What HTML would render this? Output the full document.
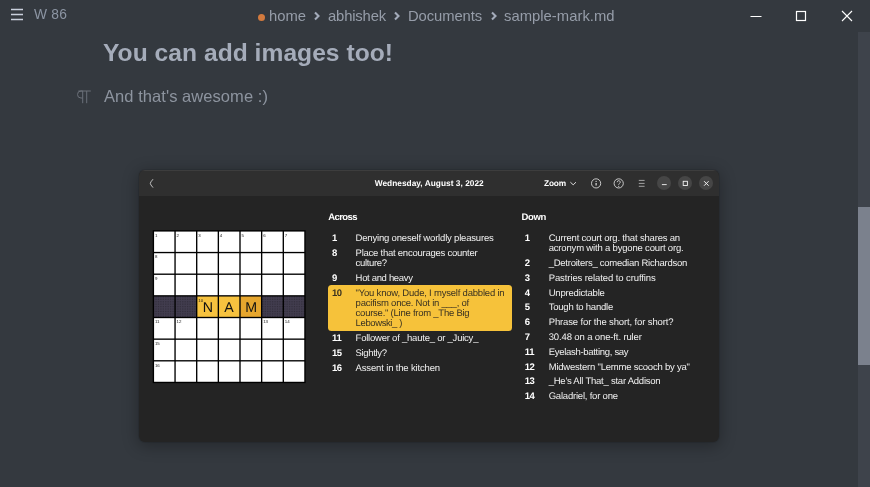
<!DOCTYPE html>
<html><head><meta charset="utf-8">
<style>
html,body{margin:0;padding:0;}
body{width:870px;height:487px;overflow:hidden;background:#34393f;font-family:"Liberation Sans",sans-serif;position:relative;}
.abs{position:absolute;}
.t{position:absolute;white-space:pre;font-family:"Liberation Sans",sans-serif;}
#sbtrack{position:absolute;left:858px;top:32px;width:12px;height:455px;background:#3e434b;}
#sbthumb{position:absolute;left:858px;top:207px;width:12px;height:158px;background:#7b818d;}
#win{position:absolute;left:139px;top:170px;width:580px;height:271.5px;background:#242424;border-radius:6px;box-shadow:0 3px 16px 1px rgba(0,0,0,.30),0 0 0 1px rgba(0,0,0,.08);overflow:hidden;}
#hdr{position:absolute;left:0;top:0;width:580px;height:26px;background:#2f2f2f;box-shadow:inset 0 1px 0 rgba(255,255,255,.07);}
#xw{position:absolute;left:0;top:0;width:870px;height:487px;will-change:transform;}
#hl{position:absolute;left:328px;top:285px;width:184px;height:45.5px;background:#f6c23a;border-radius:3.5px;}
.cb{position:absolute;width:14px;height:14px;border-radius:50%;background:#464646;top:176.4px;}
</style></head><body>
<svg class="abs" style="left:10px;top:7px" width="14" height="14" viewBox="0 0 14 14"><path d="M1 2.5h12M1 7.5h12M1 12.5h12" stroke="#c9d0dc" stroke-width="1.6" fill="none"/></svg>
<div class="abs" style="left:258px;top:14px;width:7px;height:7px;border-radius:4px;background:#d27a3e"></div>
<svg class="abs" style="left:313px;top:11px" width="8" height="10" viewBox="0 0 8 10"><path d="M2 1.5l3.5 3.5L2 8.5" stroke="#a3abba" stroke-width="2.1" fill="none"/></svg>
<svg class="abs" style="left:393px;top:11px" width="8" height="10" viewBox="0 0 8 10"><path d="M2 1.5l3.5 3.5L2 8.5" stroke="#a3abba" stroke-width="2.1" fill="none"/></svg>
<svg class="abs" style="left:490px;top:11px" width="8" height="10" viewBox="0 0 8 10"><path d="M2 1.5l3.5 3.5L2 8.5" stroke="#a3abba" stroke-width="2.1" fill="none"/></svg>
<svg class="abs" style="left:750px;top:8px" width="110" height="16" viewBox="0 0 110 16"><path d="M0.5 8.5h11" stroke="#fff" stroke-width="1" fill="none"/><rect x="46.5" y="3.500" width="9" height="9" stroke="#fff" stroke-width="1.2" fill="none"/><path d="M92 3l10 10M102 3l-10 10" stroke="#fff" stroke-width="1.1" fill="none"/></svg>
<svg class="abs" style="left:74px;top:88px" width="20" height="18" viewBox="74 88 20 18"><path d="M78.400 91H90.800M82.700 91V103.200M86.700 91V103.200M82.700 91H81a3.500 3.500 0 0 0 0 7H82.700" stroke="#6b7079" stroke-width="1" fill="none"/></svg>
<div id="sbtrack"></div><div id="sbthumb"></div>
<div id="win"><div id="hdr"></div></div>
<div id="hl"></div>
<div class="cb" style="left:657.1px"></div><div class="cb" style="left:678.3px"></div><div class="cb" style="left:699.3px"></div>
<svg class="abs" style="left:0;top:0;will-change:transform" width="870" height="487" viewBox="0 0 870 487">
<defs><pattern id="dots" width="1.7" height="1.7" patternUnits="userSpaceOnUse"><rect width="1.7" height="1.7" fill="#423d4f"/><rect width="0.8" height="0.8" fill="#2e2a37"/></pattern></defs>
<rect x="152.72" y="230.22" width="152.91" height="152.91" fill="#000"/>
<rect x="154.08" y="231.58" width="20.29" height="20.29" fill="#ffffff"/>
<rect x="175.73" y="231.58" width="20.29" height="20.29" fill="#ffffff"/>
<rect x="197.38" y="231.58" width="20.29" height="20.29" fill="#ffffff"/>
<rect x="219.03" y="231.58" width="20.29" height="20.29" fill="#ffffff"/>
<rect x="240.68" y="231.58" width="20.29" height="20.29" fill="#ffffff"/>
<rect x="262.33" y="231.58" width="20.29" height="20.29" fill="#ffffff"/>
<rect x="283.98" y="231.58" width="20.29" height="20.29" fill="#ffffff"/>
<rect x="154.08" y="253.23" width="20.29" height="20.29" fill="#ffffff"/>
<rect x="175.73" y="253.23" width="20.29" height="20.29" fill="#ffffff"/>
<rect x="197.38" y="253.23" width="20.29" height="20.29" fill="#ffffff"/>
<rect x="219.03" y="253.23" width="20.29" height="20.29" fill="#ffffff"/>
<rect x="240.68" y="253.23" width="20.29" height="20.29" fill="#ffffff"/>
<rect x="262.33" y="253.23" width="20.29" height="20.29" fill="#ffffff"/>
<rect x="283.98" y="253.23" width="20.29" height="20.29" fill="#ffffff"/>
<rect x="154.08" y="274.88" width="20.29" height="20.29" fill="#ffffff"/>
<rect x="175.73" y="274.88" width="20.29" height="20.29" fill="#ffffff"/>
<rect x="197.38" y="274.88" width="20.29" height="20.29" fill="#ffffff"/>
<rect x="219.03" y="274.88" width="20.29" height="20.29" fill="#ffffff"/>
<rect x="240.68" y="274.88" width="20.29" height="20.29" fill="#ffffff"/>
<rect x="262.33" y="274.88" width="20.29" height="20.29" fill="#ffffff"/>
<rect x="283.98" y="274.88" width="20.29" height="20.29" fill="#ffffff"/>
<rect x="154.08" y="296.53" width="20.29" height="20.29" fill="url(#dots)"/>
<rect x="175.73" y="296.53" width="20.29" height="20.29" fill="url(#dots)"/>
<rect x="197.38" y="296.53" width="20.29" height="20.29" fill="#f6c23f"/>
<rect x="219.03" y="296.53" width="20.29" height="20.29" fill="#f6c23f"/>
<rect x="240.68" y="296.53" width="20.29" height="20.29" fill="#e6a62e"/>
<rect x="262.33" y="296.53" width="20.29" height="20.29" fill="url(#dots)"/>
<rect x="283.98" y="296.53" width="20.29" height="20.29" fill="url(#dots)"/>
<rect x="154.08" y="318.18" width="20.29" height="20.29" fill="#ffffff"/>
<rect x="175.73" y="318.18" width="20.29" height="20.29" fill="#ffffff"/>
<rect x="197.38" y="318.18" width="20.29" height="20.29" fill="#ffffff"/>
<rect x="219.03" y="318.18" width="20.29" height="20.29" fill="#ffffff"/>
<rect x="240.68" y="318.18" width="20.29" height="20.29" fill="#ffffff"/>
<rect x="262.33" y="318.18" width="20.29" height="20.29" fill="#ffffff"/>
<rect x="283.98" y="318.18" width="20.29" height="20.29" fill="#ffffff"/>
<rect x="154.08" y="339.83" width="20.29" height="20.29" fill="#ffffff"/>
<rect x="175.73" y="339.83" width="20.29" height="20.29" fill="#ffffff"/>
<rect x="197.38" y="339.83" width="20.29" height="20.29" fill="#ffffff"/>
<rect x="219.03" y="339.83" width="20.29" height="20.29" fill="#ffffff"/>
<rect x="240.68" y="339.83" width="20.29" height="20.29" fill="#ffffff"/>
<rect x="262.33" y="339.83" width="20.29" height="20.29" fill="#ffffff"/>
<rect x="283.98" y="339.83" width="20.29" height="20.29" fill="#ffffff"/>
<rect x="154.08" y="361.48" width="20.29" height="20.29" fill="#ffffff"/>
<rect x="175.73" y="361.48" width="20.29" height="20.29" fill="#ffffff"/>
<rect x="197.38" y="361.48" width="20.29" height="20.29" fill="#ffffff"/>
<rect x="219.03" y="361.48" width="20.29" height="20.29" fill="#ffffff"/>
<rect x="240.68" y="361.48" width="20.29" height="20.29" fill="#ffffff"/>
<rect x="262.33" y="361.48" width="20.29" height="20.29" fill="#ffffff"/>
<rect x="283.98" y="361.48" width="20.29" height="20.29" fill="#ffffff"/>
<text x="154.90" y="236.80" font-size="4.4" fill="#1a1a1a" font-family="Liberation Sans, sans-serif">1</text>
<text x="176.55" y="236.80" font-size="4.4" fill="#1a1a1a" font-family="Liberation Sans, sans-serif">2</text>
<text x="198.20" y="236.80" font-size="4.4" fill="#1a1a1a" font-family="Liberation Sans, sans-serif">3</text>
<text x="219.85" y="236.80" font-size="4.4" fill="#1a1a1a" font-family="Liberation Sans, sans-serif">4</text>
<text x="241.50" y="236.80" font-size="4.4" fill="#1a1a1a" font-family="Liberation Sans, sans-serif">5</text>
<text x="263.15" y="236.80" font-size="4.4" fill="#1a1a1a" font-family="Liberation Sans, sans-serif">6</text>
<text x="284.80" y="236.80" font-size="4.4" fill="#1a1a1a" font-family="Liberation Sans, sans-serif">7</text>
<text x="154.90" y="258.45" font-size="4.4" fill="#1a1a1a" font-family="Liberation Sans, sans-serif">8</text>
<text x="154.90" y="280.10" font-size="4.4" fill="#1a1a1a" font-family="Liberation Sans, sans-serif">9</text>
<text x="198.20" y="301.75" font-size="4.4" fill="#1a1a1a" font-family="Liberation Sans, sans-serif">10</text>
<text x="154.90" y="323.40" font-size="4.4" fill="#1a1a1a" font-family="Liberation Sans, sans-serif">11</text>
<text x="176.55" y="323.40" font-size="4.4" fill="#1a1a1a" font-family="Liberation Sans, sans-serif">12</text>
<text x="263.15" y="323.40" font-size="4.4" fill="#1a1a1a" font-family="Liberation Sans, sans-serif">13</text>
<text x="284.80" y="323.40" font-size="4.4" fill="#1a1a1a" font-family="Liberation Sans, sans-serif">14</text>
<text x="154.90" y="345.05" font-size="4.4" fill="#1a1a1a" font-family="Liberation Sans, sans-serif">15</text>
<text x="154.90" y="366.70" font-size="4.4" fill="#1a1a1a" font-family="Liberation Sans, sans-serif">16</text>
<!-- header icons -->
<path d="M153 179.2Q150.300 182.300 150.300 183.400Q150.300 184.500 153 187.600" stroke="#d0d0d0" stroke-width="0.9" fill="none"/>
<path d="M570.4 182.2L573.2 184.8L576 182.2" stroke="#eee" stroke-width="0.9" fill="none"/>
<circle cx="596.1" cy="183.4" r="4.6" stroke="#eee" stroke-width="0.8" fill="none"/>
<path d="M596.1 182.900v2.700" stroke="#eee" stroke-width="1.1" fill="none"/><circle cx="596.1" cy="181.300" r="0.65" fill="#eee"/>
<circle cx="618.7" cy="183.4" r="4.6" stroke="#eee" stroke-width="0.8" fill="none"/>
<path d="M617.2 182.2a1.5 1.5 0 1 1 2.2 1.3c-0.5 0.3-0.7 0.6-0.7 1.2" stroke="#eee" stroke-width="0.8" fill="none"/><circle cx="618.7" cy="186.2" r="0.55" fill="#eee"/>
<path d="M638.8 180.4h5.8M638.8 183.4h5.8M638.8 186.3h5.8" stroke="#d4d4d4" stroke-width="0.7" fill="none"/>
<path d="M661.9 184.6h4.8" stroke="#f4f4f4" stroke-width="0.9" fill="none"/>
<rect x="683.2" y="181.3" width="4.2" height="4.2" stroke="#f4f4f4" stroke-width="0.9" fill="none"/>
<path d="M704.1 181.2l4.5 4.5M708.6 181.2l-4.500 4.500" stroke="#f2f2f2" stroke-width="1.0" fill="none"/>
</svg>
<div class="t" style="left:34.0px;top:6px;font-size:13.8px;line-height:17px;color:#8c95a3;letter-spacing:0.199px;">W 86</div>
<div class="t" style="left:269.0px;top:7px;font-size:14.8px;line-height:18px;color:#969da9;">home</div>
<div class="t" style="left:328.0px;top:7px;font-size:14.8px;line-height:18px;color:#969da9;letter-spacing:-0.154px;">abhishek</div>
<div class="t" style="left:408.0px;top:7px;font-size:14.8px;line-height:18px;color:#969da9;letter-spacing:-0.094px;">Documents</div>
<div class="t" style="left:504.0px;top:7px;font-size:14.8px;line-height:18px;color:#969da9;letter-spacing:0.029px;">sample-mark.md</div>
<div class="t" style="left:103.0px;top:38px;font-size:24.6px;line-height:30px;color:#a5acba;font-weight:bold;letter-spacing:0.033px;">You can add images too!</div>
<div class="t" style="left:104.0px;top:86px;font-size:16.5px;line-height:20px;color:#8d949f;letter-spacing:0.060px;">And that's awesome :)</div>
<div id="xw">
<div class="t" style="left:374.7px;top:178px;font-size:8.3px;line-height:10px;color:#ffffff;font-weight:bold;text-rendering:geometricPrecision;letter-spacing:0.035px;">Wednesday, August 3, 2022</div>
<div class="t" style="left:544.0px;top:178px;font-size:8.3px;line-height:10px;color:#ffffff;font-weight:bold;text-rendering:geometricPrecision;letter-spacing:-0.148px;">Zoom</div>
<div class="t" style="left:328.3px;top:212px;font-size:9.5px;line-height:11px;color:#ffffff;font-weight:bold;text-rendering:geometricPrecision;letter-spacing:-0.600px;">Across</div>
<div class="t" style="left:521.4px;top:212px;font-size:9.5px;line-height:11px;color:#ffffff;font-weight:bold;text-rendering:geometricPrecision;letter-spacing:-0.315px;">Down</div>
<div class="t" style="left:332.0px;top:233px;font-size:9.5px;line-height:11px;color:#ffffff;font-weight:bold;text-rendering:geometricPrecision;letter-spacing:-0.600px;">1</div>
<div class="t" style="left:355.6px;top:233px;font-size:9.5px;line-height:11px;color:#f0f0f0;text-rendering:geometricPrecision;letter-spacing:-0.187px;">Denying oneself worldly pleasures</div>
<div class="t" style="left:332.0px;top:248px;font-size:9.5px;line-height:11px;color:#ffffff;font-weight:bold;text-rendering:geometricPrecision;letter-spacing:-0.600px;">8</div>
<div class="t" style="left:355.6px;top:248px;font-size:9.5px;line-height:11px;color:#f0f0f0;text-rendering:geometricPrecision;letter-spacing:-0.241px;">Place that encourages counter</div>
<div class="t" style="left:355.6px;top:258px;font-size:9.5px;line-height:11px;color:#f0f0f0;text-rendering:geometricPrecision;letter-spacing:-0.339px;">culture?</div>
<div class="t" style="left:332.0px;top:273px;font-size:9.5px;line-height:11px;color:#ffffff;font-weight:bold;text-rendering:geometricPrecision;letter-spacing:-0.600px;">9</div>
<div class="t" style="left:355.6px;top:273px;font-size:9.5px;line-height:11px;color:#f0f0f0;text-rendering:geometricPrecision;letter-spacing:-0.328px;">Hot and heavy</div>
<div class="t" style="left:332.0px;top:288px;font-size:9.5px;line-height:11px;color:#3a3221;font-weight:bold;text-rendering:geometricPrecision;letter-spacing:-0.589px;">10</div>
<div class="t" style="left:355.6px;top:288px;font-size:9.5px;line-height:11px;color:#3a3221;text-rendering:geometricPrecision;letter-spacing:-0.205px;">"You know, Dude, I myself dabbled in</div>
<div class="t" style="left:355.6px;top:298px;font-size:9.5px;line-height:11px;color:#3a3221;text-rendering:geometricPrecision;letter-spacing:-0.223px;">pacifism once. Not in ___, of</div>
<div class="t" style="left:355.6px;top:308px;font-size:9.5px;line-height:11px;color:#3a3221;text-rendering:geometricPrecision;letter-spacing:-0.243px;">course." (Line from _The Big</div>
<div class="t" style="left:355.6px;top:318px;font-size:9.5px;line-height:11px;color:#3a3221;text-rendering:geometricPrecision;letter-spacing:-0.391px;">Lebowski_ )</div>
<div class="t" style="left:332.0px;top:333px;font-size:9.5px;line-height:11px;color:#ffffff;font-weight:bold;text-rendering:geometricPrecision;letter-spacing:-0.323px;">11</div>
<div class="t" style="left:355.6px;top:333px;font-size:9.5px;line-height:11px;color:#f0f0f0;text-rendering:geometricPrecision;letter-spacing:-0.226px;">Follower of _haute_ or _Juicy_</div>
<div class="t" style="left:332.0px;top:348px;font-size:9.5px;line-height:11px;color:#ffffff;font-weight:bold;text-rendering:geometricPrecision;letter-spacing:-0.589px;">15</div>
<div class="t" style="left:355.6px;top:348px;font-size:9.5px;line-height:11px;color:#f0f0f0;text-rendering:geometricPrecision;letter-spacing:-0.339px;">Sightly?</div>
<div class="t" style="left:332.0px;top:363px;font-size:9.5px;line-height:11px;color:#ffffff;font-weight:bold;text-rendering:geometricPrecision;letter-spacing:-0.589px;">16</div>
<div class="t" style="left:355.6px;top:363px;font-size:9.5px;line-height:11px;color:#f0f0f0;text-rendering:geometricPrecision;letter-spacing:-0.156px;">Assent in the kitchen</div>
<div class="t" style="left:524.8px;top:233px;font-size:9.5px;line-height:11px;color:#ffffff;font-weight:bold;text-rendering:geometricPrecision;letter-spacing:-0.600px;">1</div>
<div class="t" style="left:548.7px;top:233px;font-size:9.5px;line-height:11px;color:#f0f0f0;text-rendering:geometricPrecision;letter-spacing:-0.182px;">Current court org. that shares an</div>
<div class="t" style="left:548.7px;top:243px;font-size:9.5px;line-height:11px;color:#f0f0f0;text-rendering:geometricPrecision;letter-spacing:-0.177px;">acronym with a bygone court org.</div>
<div class="t" style="left:524.8px;top:258px;font-size:9.5px;line-height:11px;color:#ffffff;font-weight:bold;text-rendering:geometricPrecision;letter-spacing:-0.600px;">2</div>
<div class="t" style="left:548.7px;top:258px;font-size:9.5px;line-height:11px;color:#f0f0f0;text-rendering:geometricPrecision;letter-spacing:-0.249px;">_Detroiters_ comedian Richardson</div>
<div class="t" style="left:524.8px;top:273px;font-size:9.5px;line-height:11px;color:#ffffff;font-weight:bold;text-rendering:geometricPrecision;letter-spacing:-0.600px;">3</div>
<div class="t" style="left:548.7px;top:273px;font-size:9.5px;line-height:11px;color:#f0f0f0;text-rendering:geometricPrecision;letter-spacing:-0.095px;">Pastries related to cruffins</div>
<div class="t" style="left:524.8px;top:288px;font-size:9.5px;line-height:11px;color:#ffffff;font-weight:bold;text-rendering:geometricPrecision;letter-spacing:-0.600px;">4</div>
<div class="t" style="left:548.7px;top:288px;font-size:9.5px;line-height:11px;color:#f0f0f0;text-rendering:geometricPrecision;letter-spacing:-0.202px;">Unpredictable</div>
<div class="t" style="left:524.8px;top:302px;font-size:9.5px;line-height:11px;color:#ffffff;font-weight:bold;text-rendering:geometricPrecision;letter-spacing:-0.600px;">5</div>
<div class="t" style="left:548.7px;top:302px;font-size:9.5px;line-height:11px;color:#f0f0f0;text-rendering:geometricPrecision;letter-spacing:-0.222px;">Tough to handle</div>
<div class="t" style="left:524.8px;top:317px;font-size:9.5px;line-height:11px;color:#ffffff;font-weight:bold;text-rendering:geometricPrecision;letter-spacing:-0.600px;">6</div>
<div class="t" style="left:548.7px;top:317px;font-size:9.5px;line-height:11px;color:#f0f0f0;text-rendering:geometricPrecision;letter-spacing:-0.129px;">Phrase for the short, for short?</div>
<div class="t" style="left:524.8px;top:332px;font-size:9.5px;line-height:11px;color:#ffffff;font-weight:bold;text-rendering:geometricPrecision;letter-spacing:-0.600px;">7</div>
<div class="t" style="left:548.7px;top:332px;font-size:9.5px;line-height:11px;color:#f0f0f0;text-rendering:geometricPrecision;letter-spacing:-0.126px;">30.48 on a one-ft. ruler</div>
<div class="t" style="left:524.8px;top:347px;font-size:9.5px;line-height:11px;color:#ffffff;font-weight:bold;text-rendering:geometricPrecision;letter-spacing:-0.323px;">11</div>
<div class="t" style="left:548.7px;top:347px;font-size:9.5px;line-height:11px;color:#f0f0f0;text-rendering:geometricPrecision;letter-spacing:-0.297px;">Eyelash-batting, say</div>
<div class="t" style="left:524.8px;top:362px;font-size:9.5px;line-height:11px;color:#ffffff;font-weight:bold;text-rendering:geometricPrecision;letter-spacing:-0.589px;">12</div>
<div class="t" style="left:548.7px;top:362px;font-size:9.5px;line-height:11px;color:#f0f0f0;text-rendering:geometricPrecision;letter-spacing:-0.217px;">Midwestern "Lemme scooch by ya"</div>
<div class="t" style="left:524.8px;top:376px;font-size:9.5px;line-height:11px;color:#ffffff;font-weight:bold;text-rendering:geometricPrecision;letter-spacing:-0.589px;">13</div>
<div class="t" style="left:548.7px;top:376px;font-size:9.5px;line-height:11px;color:#f0f0f0;text-rendering:geometricPrecision;letter-spacing:-0.238px;">_He's All That_ star Addison</div>
<div class="t" style="left:524.8px;top:391px;font-size:9.5px;line-height:11px;color:#ffffff;font-weight:bold;text-rendering:geometricPrecision;letter-spacing:-0.589px;">14</div>
<div class="t" style="left:548.7px;top:391px;font-size:9.5px;line-height:11px;color:#f0f0f0;text-rendering:geometricPrecision;letter-spacing:-0.210px;">Galadriel, for one</div>
<div class="t" style="left:202.8px;top:300px;font-size:14.2px;line-height:17px;color:#111;text-rendering:geometricPrecision;letter-spacing:-0.600px;">N</div>
<div class="t" style="left:224.2px;top:300px;font-size:14.2px;line-height:17px;color:#111;text-rendering:geometricPrecision;letter-spacing:0.531px;">A</div>
<div class="t" style="left:245.3px;top:300px;font-size:14.2px;line-height:17px;color:#111;text-rendering:geometricPrecision;letter-spacing:0.172px;">M</div>
</div>
</body></html>
